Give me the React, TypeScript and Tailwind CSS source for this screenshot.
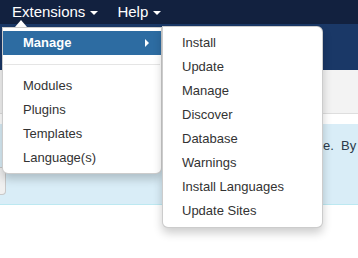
import { FC } from "react";

const manageItems = ["Install", "Update", "Manage", "Discover", "Database", "Warnings", "Install Languages", "Update Sites"];
const extensionItems = ["Modules", "Plugins", "Templates", "Language(s)"];

const Caret: FC<{ className?: string }> = ({ className }) => (
  <span className={`inline-block h-0 w-0 border-x-[4px] border-t-[4px] border-x-transparent border-t-white ${className ?? ""}`} />
);

export default function App() {
  return (
    <div className="relative h-[258px] w-[358px] overflow-hidden bg-white font-['Liberation_Sans',Arial,sans-serif] text-[13px] text-[#333]">
      <nav className="flex h-6 items-center gap-[19px] bg-[#12213f] pl-3 text-[15px] leading-5 text-white">
        <span className="flex items-center gap-[5px]">
          Extensions <Caret className="mt-[2px]" />
        </span>
        <span className="flex items-center gap-[5px]">
          Help <Caret className="mt-[2px]" />
        </span>
      </nav>
      <header className="h-[46px] bg-[#1a3867]" />
      <div className="h-[44px] border-b border-[#dedede] bg-[#f3f3f3]" />
      <div className="mt-[10px] h-[81px] border-b border-[#bce8f1] bg-[#d9edf7]">
        <p className="whitespace-nowrap pl-[323px] pt-[13px] leading-[18px] text-[#2b3a4a]">e.&nbsp;&nbsp;By</p>
        <div className="mt-[12px] h-[28px] w-[6px] rounded-r-[4px] border border-l-0 border-[#c8c8c8] bg-[#f0f0f0]" />
      </div>
      <p className="mt-[50px] whitespace-nowrap leading-[18px] text-[#2a6fb0]">
        ll from Folder&nbsp;&nbsp;&nbsp;&nbsp;&nbsp;Install from URL
      </p>

      {/* pointer under Extensions */}
      <span className="absolute left-[15px] top-[20px] h-0 w-0 border-x-[6px] border-b-[7px] border-x-transparent border-b-white" />

      {/* Extensions dropdown */}
      <div className="absolute left-[2px] top-[27px] w-[160px] rounded-b-[6px] border border-[rgba(0,0,0,0.2)] bg-white py-[3px] shadow-[0_5px_10px_rgba(0,0,0,0.2)]">
        <div className="flex h-6 items-center justify-between bg-[#2d6ca2] pl-5 pr-3 font-bold text-white">
          Manage
          <span className="h-0 w-0 border-y-[4px] border-l-[4px] border-y-transparent border-l-white" />
        </div>
        <div className="mx-[1px] my-[9px] h-px bg-[#e5e5e5]" />
        {extensionItems.map((item) => (
          <div key={item} className="flex h-6 items-center pl-5">
            {item}
          </div>
        ))}
      </div>

      {/* Manage submenu */}
      <div className="absolute left-[162px] top-[26px] w-[161px] rounded-[6px] rounded-tl-none border border-[rgba(0,0,0,0.2)] bg-white py-[4px] shadow-[0_5px_10px_rgba(0,0,0,0.2)]">
        {manageItems.map((item) => (
          <div key={item} className="flex h-6 items-center pl-[19px]">
            {item}
          </div>
        ))}
      </div>
    </div>
  );
}
